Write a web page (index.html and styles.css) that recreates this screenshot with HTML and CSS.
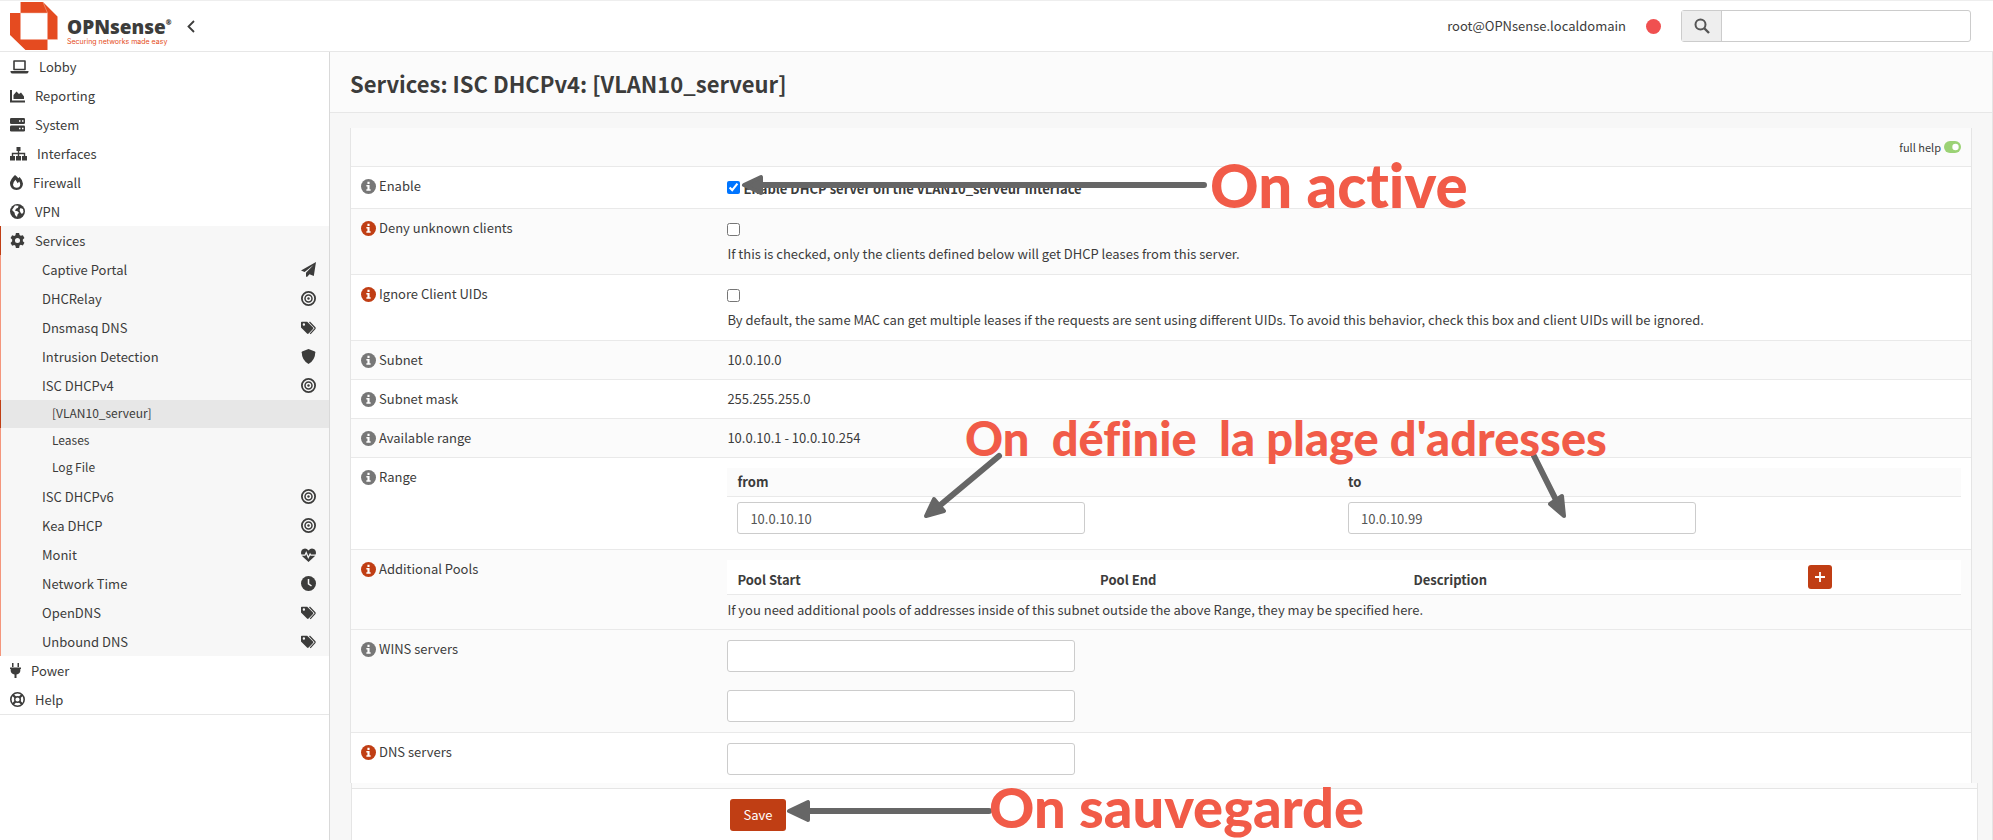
FILE: index.html
```
<!DOCTYPE html>
<html lang="en">

<head>
    <meta charset="utf-8">
    <meta name="viewport" content="width=device-width, initial-scale=1">
    <title>Services: ISC DHCPv4: [VLAN10_serveur]</title>
    <link rel="stylesheet" href="styles.css">
</head>

<body>
    <!-- Shared icons -->
    <svg class="sprite" aria-hidden="true">
        <symbol id="info" viewBox="0 0 14 14">
            <circle cx="7" cy="7" r="7" fill="currentColor" />
            <path d="M6 2.6h2v2H6zM5 5.6h3v4h1v1.3H5V9.600h1V7H5z" fill="#fff" />
        </symbol>
        <symbol id="laptop" viewBox="0 0 18 14">
            <path d="M3.500 1h11v8.500h-11z" fill="none" stroke="currentColor" stroke-width="1.600" stroke-linejoin="round" />
            <path d="M0 11h18v1q-.5 1.500-2 1.500H2Q.5 13.500 0 12z" fill="currentColor" />
        </symbol>
        <symbol id="chart" viewBox="0 0 15 14">
            <path d="M1 1v11.500h14" fill="none" stroke="currentColor" stroke-width="2" />
            <path d="M3.500 10V6l3-3.500L9 5l2-1.500 3 4V10z" fill="currentColor" />
        </symbol>
        <symbol id="server" viewBox="0 0 15 14">
            <rect y="0" width="15" height="6" rx="1.300" fill="currentColor" />
            <rect y="7.500" width="15" height="6" rx="1.300" fill="currentColor" />
            <path d="M9 3h1.500M12 3h1.500M9 10.500h1.500M12 10.500h1.500" stroke="#fff" stroke-width="1.300" />
        </symbol>
        <symbol id="sitemap" viewBox="0 0 17 14">
            <path d="M6.500 0h4v4h-4zM0 9h5v4.500H0zM6 9h5v4.500H6zM12 9h5v4.500h-5z" fill="currentColor" />
            <path d="M8.500 3v6M2.500 9V6.500h12V9" fill="none" stroke="currentColor" stroke-width="1.400" />
        </symbol>
        <symbol id="fire" viewBox="0 0 13 15">
            <path fill-rule="evenodd" d="M5 0q2 1.300 3.300 3.200L9.600 2Q13 5.500 13 8.700 12.600 14.500 6.500 15 .4 14.500 0 8.700 0 4.500 5 0zM5.500 4.800Q2.800 7.500 3 9.700q.5 3 3.500 3.100 3.500-.1 3.700-3.300 0-1.500-1-3L7.700 8.300z" fill="currentColor" />
        </symbol>
        <symbol id="globe" viewBox="0 0 15 15">
            <circle cx="7.500" cy="7.500" r="7.500" fill="currentColor" />
            <path d="M5 1.500l3.500.3-.5 2-2 1-1 2 2.500.5 1.500 1.500-1.500 1.700-.5 2.500-2-2-.5-2.500L2 6zM10.500 4l2.500 1 .5 3-1.500 2-1.500-1.500L9.500 6z" fill="#fff" />
        </symbol>
        <symbol id="gear" viewBox="0 0 16 16">
            <path fill-rule="evenodd" d="M6.300 0h3.400l.5 2.200 1.300.8 2.200-.7 1.700 2.900-1.700 1.600v1.900l1.700 1.600-1.700 2.900-2.200-.7-1.300.8L9.700 16H6.300l-.5-2.400-1.300-.8-2.200.7-1.700-2.900 1.700-1.800V7L.6 5.400l1.700-2.900 2.200.7 1.300-.8zM8 5.300a2.700 2.700 0 100 5.400 2.700 2.700 0 000-5.400z" fill="currentColor" />
        </symbol>
        <symbol id="plane" viewBox="0 0 15 15">
            <path fill-rule="evenodd" d="M15 0L12.800 14 8.500 12.200 6 15 5 14.500V10.800L12.500 3 3.600 9.900 0 8.400z" fill="currentColor" />
        </symbol>
        <symbol id="target" viewBox="0 0 15 15">
            <circle cx="7.500" cy="7.500" r="6.600" fill="none" stroke="currentColor" stroke-width="1.800" />
            <circle cx="7.500" cy="7.500" r="3.500" fill="none" stroke="currentColor" stroke-width="1.500" />
            <circle cx="7.500" cy="7.500" r="1.200" fill="currentColor" />
        </symbol>
        <symbol id="tags" viewBox="0 0 15 14">
            <path fill-rule="evenodd" d="M0 1.500Q0 .7.8.7h5.400L12 6.500q.7.700 0 1.500l-4.400 4.500q-.8.800-1.600 0L0 6.600zM2.900 2.300a1.200 1.200 0 100 2.400 1.200 1.200 0 000-2.400z" fill="currentColor" />
            <path d="M8.500 1l5.300 5.500q.6.700 0 1.400L9.200 12.800" fill="none" stroke="currentColor" stroke-width="1.200" />
        </symbol>
        <symbol id="shield" viewBox="0 0 15 15">
            <path d="M7.500 0l6.400 2.500q.4.300.4.700Q14.200 11 7.500 15 .8 11 .7 3.200q0-.5.4-.7z" fill="currentColor" />
        </symbol>
        <symbol id="heart" viewBox="0 0 15 14">
            <path d="M7.500 2.500Q9 .5 11 .5q4 .4 4 4.500 0 1.500-1.500 3.500l-6 5.500-6-5.500Q0 6.500 0 5 0 .900 4 .5q2 0 3.500 2z" fill="currentColor" />
            <path d="M0 7.200h4l1.200-2.600L7.300 9.500l1.800-3.500.7 1.200H15" fill="none" stroke="#f7f7f7" stroke-width="1.200" />
        </symbol>
        <symbol id="clock" viewBox="0 0 15 15">
            <circle cx="7.500" cy="7.500" r="7.500" fill="currentColor" />
            <path d="M7.500 3v4.800l3 2.200" fill="none" stroke="#f7f7f7" stroke-width="1.500" />
        </symbol>
        <symbol id="plug" viewBox="0 0 11 15">
            <path d="M2 0h1.500v4H2zM7.500 0H9v4H7.500zM0 4.500h11V6h-.7v2Q10 10.500 6.500 11.500V15h-2v-3.500Q1 10.500.7 8V6H0z" fill="currentColor" />
        </symbol>
        <symbol id="ring" viewBox="0 0 15 15">
            <circle cx="7.500" cy="7.500" r="6.700" fill="none" stroke="currentColor" stroke-width="1.600" />
            <circle cx="7.500" cy="7.500" r="2.800" fill="none" stroke="currentColor" stroke-width="1.400" />
            <path d="M3 3l2.600 2.600M12 3L9.400 5.600M3 12l2.600-2.600M12 12L9.400 9.400" stroke="currentColor" stroke-width="2.200" />
        </symbol>
    </svg>

    <header class="topbar">
        <a class="brand" href="#">
            <svg class="brand-mark" width="48" height="48" viewBox="0 0 48 48" aria-hidden="true">
                <path fill-rule="evenodd" fill="#e54b20" d="M10.500 0H33l14.500 14.500V37.500h-10V48h-22L0 33V11h10.500zM10.500 11v26.500h27V11z" />
                <path fill="none" stroke="#f6b9a6" d="M10.500 0v11h27L33 0M37.500 37.500h10" opacity=".5" />
            </svg>
            <span class="brand-text">
                <span class="brand-name">OPNsense<sup>®</sup></span>
                <span class="brand-tag">Securing networks made easy</span>
            </span>
        </a>
        <button class="collapse" type="button" aria-label="Toggle sidebar">
            <svg width="8" height="13" viewBox="0 0 8 13"><path d="M7 1L1.500 6.500 7 12" fill="none" stroke="currentColor" stroke-width="1.800" /></svg>
        </button>
        <span class="user">root@OPNsense.localdomain</span>
        <span class="status"></span>
        <form class="search">
            <label for="search" aria-label="Search">
                <svg width="16" height="16" viewBox="0 0 16 16"><circle cx="6.500" cy="6.500" r="5" fill="none" stroke="currentColor" stroke-width="2" /><path d="M10 10l5 5" stroke="currentColor" stroke-width="2.400" /></svg>
            </label>
            <input type="text" id="search">
        </form>
    </header>

    <div class="page">
        <!-- Sidebar menu -->
        <nav class="sidebar">
            <a href="#"><svg width="19" height="14"><use href="#laptop" /></svg>Lobby</a>
            <a href="#"><svg width="15" height="14"><use href="#chart" /></svg>Reporting</a>
            <a href="#"><svg width="15" height="14"><use href="#server" /></svg>System</a>
            <a href="#"><svg width="17" height="14"><use href="#sitemap" /></svg>Interfaces</a>
            <a href="#"><svg width="13" height="15"><use href="#fire" /></svg>Firewall</a>
            <a href="#"><svg width="15" height="15"><use href="#globe" /></svg>VPN</a>
            <a href="#" class="open"><svg width="15" height="15"><use href="#gear" /></svg>Services</a>
            <div class="submenu">
                <a href="#">Captive Portal<svg width="15" height="15"><use href="#plane" /></svg></a>
                <a href="#">DHCRelay<svg width="15" height="15"><use href="#target" /></svg></a>
                <a href="#">Dnsmasq DNS<svg width="15" height="14"><use href="#tags" /></svg></a>
                <a href="#">Intrusion Detection<svg width="15" height="15"><use href="#shield" /></svg></a>
                <a href="#">ISC DHCPv4<svg width="15" height="15"><use href="#target" /></svg></a>
                <a href="#" class="leaf active">[VLAN10_serveur]</a>
                <a href="#" class="leaf">Leases</a>
                <a href="#" class="leaf">Log File</a>
                <a href="#">ISC DHCPv6<svg width="15" height="15"><use href="#target" /></svg></a>
                <a href="#">Kea DHCP<svg width="15" height="15"><use href="#target" /></svg></a>
                <a href="#">Monit<svg width="15" height="14"><use href="#heart" /></svg></a>
                <a href="#">Network Time<svg width="15" height="15"><use href="#clock" /></svg></a>
                <a href="#">OpenDNS<svg width="15" height="14"><use href="#tags" /></svg></a>
                <a href="#">Unbound DNS<svg width="15" height="14"><use href="#tags" /></svg></a>
            </div>
            <a href="#"><svg width="11" height="15"><use href="#plug" /></svg>Power</a>
            <a href="#"><svg width="15" height="15"><use href="#ring" /></svg>Help</a>
        </nav>

        <main class="main">
            <div class="page-head">
                <h1>Services: ISC DHCPv4: [VLAN10_serveur]</h1>
            </div>

            <form class="content">
                <div class="panel">
                    <div class="full-help">
                        full help
                        <svg width="17" height="12" viewBox="0 0 17 12"><rect width="17" height="12" rx="6" fill="#9bd275" /><circle cx="11.500" cy="6" r="3.200" fill="#fff" /></svg>
                    </div>

                    <div class="row">
                        <div class="name"><svg class="info"><use href="#info" /></svg>Enable</div>
                        <div class="value">
                            <div class="check">
                                <input type="checkbox" id="enable" checked>
                                <label for="enable">Enable DHCP server on the VLAN10_serveur interface</label>
                            </div>
                        </div>
                    </div>
                    <div class="row">
                        <label class="name" for="deny"><svg class="info help"><use href="#info" /></svg>Deny unknown clients</label>
                        <div class="value">
                            <div class="check"><input type="checkbox" id="deny"></div>
                            <p class="hint">If this is checked, only the clients defined below will get DHCP leases from this server.</p>
                        </div>
                    </div>
                    <div class="row">
                        <label class="name" for="ignore"><svg class="info help"><use href="#info" /></svg>Ignore Client UIDs</label>
                        <div class="value">
                            <div class="check"><input type="checkbox" id="ignore"></div>
                            <p class="hint">By default, the same MAC can get multiple leases if the requests are sent using different UIDs. To avoid this behavior, check this box and client UIDs will be ignored.</p>
                        </div>
                    </div>
                    <div class="row">
                        <div class="name"><svg class="info"><use href="#info" /></svg>Subnet</div>
                        <div class="value">10.0.10.0</div>
                    </div>
                    <div class="row">
                        <div class="name"><svg class="info"><use href="#info" /></svg>Subnet mask</div>
                        <div class="value">255.255.255.0</div>
                    </div>
                    <div class="row">
                        <div class="name"><svg class="info"><use href="#info" /></svg>Available range</div>
                        <div class="value">10.0.10.1 - 10.0.10.254</div>
                    </div>
                    <div class="row">
                        <div class="name"><svg class="info"><use href="#info" /></svg>Range</div>
                        <div class="value inset">
                            <table class="range">
                                <thead>
                                    <tr>
                                        <th class="range-from"><label for="from">from</label></th>
                                        <th><label for="to">to</label></th>
                                    </tr>
                                </thead>
                                <tbody>
                                    <tr>
                                        <td><input type="text" id="from" value="10.0.10.10"></td>
                                        <td><input type="text" id="to" value="10.0.10.99"></td>
                                    </tr>
                                </tbody>
                            </table>
                        </div>
                    </div>
                    <div class="row shaded">
                        <div class="name"><svg class="info help"><use href="#info" /></svg>Additional Pools</div>
                        <div class="value inset">
                            <table class="pools">
                                <thead>
                                    <tr>
                                        <th class="pool-start">Pool Start</th>
                                        <th class="pool-end">Pool End</th>
                                        <th class="pool-desc">Description</th>
                                        <th class="pool-add">
                                            <button class="add" type="button" aria-label="Add pool">
                                                <svg width="12" height="12" viewBox="0 0 12 12"><path d="M6 1v10M1 6h10" stroke="currentColor" stroke-width="1.800" /></svg>
                                            </button>
                                        </th>
                                    </tr>
                                </thead>
                            </table>
                            <p class="pool-help">If you need additional pools of addresses inside of this subnet outside the above Range, they may be specified here.</p>
                        </div>
                    </div>
                    <div class="row shaded">
                        <label class="name" for="wins1"><svg class="info"><use href="#info" /></svg>WINS servers</label>
                        <div class="value inset stack">
                            <input type="text" id="wins1">
                            <input type="text" id="wins2" aria-label="Second WINS server">
                        </div>
                    </div>
                    <div class="row plain">
                        <label class="name" for="dns1"><svg class="info help"><use href="#info" /></svg>DNS servers</label>
                        <div class="value inset"><input type="text" id="dns1"></div>
                    </div>
                </div>

                <div class="footer">
                    <div class="save-row">
                        <button class="save" type="button">Save</button>
                    </div>
                </div>
            </form>
        </main>

        <!-- Tutorial notes drawn over the form -->
        <svg class="arrows" width="1993" height="788" viewBox="0 52 1993 788" aria-hidden="true">
            <g stroke="#666" fill="#666" stroke-linecap="round" stroke-linejoin="round">
                <path d="M1204 185H762M999 456L938 507M1534 456L1557 502M989 811H806" stroke-width="6" />
                <path d="M744 185l17-8v16zM926 516l8-17 10 12zM1564 516l-14-12 12-8zM789 811l19-9v18z" stroke-width="4" />
            </g>
        </svg>
        <p class="note note-enable">On active</p>
        <p class="note note-range">On  définie  la plage d'adresses</p>
        <p class="note note-save">On sauvegarde</p>
    </div>
</body>

</html>
```
FILE: styles.css
```
* {
    box-sizing: border-box;
}

body {
    margin: 0;
    min-height: 100vh;
    display: flex;
    flex-direction: column;
    background-color: #fff;
    color: #3c3c3b;
    font-family: "Noto Sans CJK SC", "Noto Sans", sans-serif;
    font-size: 13px;
    line-height: 22px;
    overflow: hidden;
}

a {
    color: inherit;
    text-decoration: none;
}

p {
    margin: 0;
}

button,
input {
    font: inherit;
    color: inherit;
}

.sprite {
    display: none;
}

/* Top bar */
.topbar {
    display: flex;
    align-items: center;
    height: 52px;
    padding: 0 22px 0 10px;
    border-top: 1px solid #eee;
    border-bottom: 1px solid #e7e7e7;
}

.brand {
    display: flex;
    align-items: center;
    gap: 9px;
}

.brand-text {
    display: flex;
    flex-direction: column;
    padding-top: 10px;
}

.brand-name {
    font-family: "Open Sans", sans-serif;
    font-size: 19px;
    font-weight: 800;
    line-height: 20px;
}

.brand-name sup {
    font-size: 7px;
    line-height: 1;
    vertical-align: 9px;
}

.brand-tag {
    color: #e54b20;
    font-family: Inter, sans-serif;
    font-size: 7px;
    line-height: 9px;
}

.collapse {
    display: flex;
    margin-left: 15px;
    padding: 0;
    border: 0;
    background: none;
}

.user {
    margin-left: auto;
}

.status {
    width: 15px;
    height: 15px;
    margin: 0 20px;
    border-radius: 50%;
    background-color: #f05050;
}

.search {
    display: flex;
    width: 290px;
    height: 32px;
    border: 1px solid #ccc;
    border-radius: 3px;
}

.search label {
    display: flex;
    align-items: center;
    justify-content: center;
    width: 40px;
    border-right: 1px solid #ccc;
    background-color: #eee;
    color: #555;
}

.search input {
    flex: 1;
    min-width: 0;
    border: 0;
    background: none;
}

/* Layout */
.page {
    position: relative;
    flex: 1;
    display: flex;
}

.main {
    flex: 1;
    display: flex;
    flex-direction: column;
    min-width: 0;
    background-color: #f7f7f7;
    border-right: 1px solid #e5e5e5;
}

/* Sidebar */
.sidebar {
    width: 330px;
    border-right: 1px solid #d9d9d9;
}

.sidebar a {
    display: flex;
    align-items: center;
    gap: 10px;
    height: 29px;
    padding: 0 14px 0 10px;
}

.sidebar > a:last-child {
    height: 30px;
    border-bottom: 1px solid #e7e7e7;
}

.sidebar > .open {
    padding-left: 9px;
    border-left: 1px solid #c03e14;
    background-color: #f7f7f7;
}

.submenu {
    background-color: #f7f7f7;
}

.submenu a {
    justify-content: space-between;
    padding: 0 13px 0 41px;
    border-left: 1px solid #f4967c;
}

.submenu .leaf {
    height: 27px;
    padding-bottom: 3px;
    padding-left: 51px;
    font-size: 12px;
}

.submenu .active {
    height: 28px;
    border-left-color: #c03e14;
    background-color: #e7e7e7;
}

/* Page title */
.page-head {
    height: 61px;
    padding: 15px 20px;
    border-bottom: 1px solid #e7e7e7;
    background-color: #fbfbfb;
}

h1 {
    margin: 0;
    font-size: 22px;
    font-weight: 700;
    line-height: 32px;
}

/* Form rows */
.content {
    flex: 1;
    display: flex;
    flex-direction: column;
    padding: 15px 20px 0;
}

.panel {
    border: solid #e5e5e5;
    border-width: 0 1px;
    background-color: #fff;
}

.full-help {
    display: flex;
    align-items: center;
    justify-content: flex-end;
    gap: 3px;
    height: 38px;
    padding: 0 10px;
    background-color: #fbfbfb;
    font-size: 11px;
}

.row {
    display: flex;
    padding: 8px 10px;
    border-top: 1px solid #e9e9e9;
}

.row:nth-child(odd),
.row.shaded {
    background-color: #fbfbfb;
}

.row.plain {
    background-color: #fff;
}

.name {
    display: flex;
    align-items: center;
    gap: 3px;
    width: 22.9%;
    height: 22px;
}

.info {
    width: 15px;
    height: 15px;
    color: #777;
}

.help {
    color: #c03e14;
}

.value {
    flex: 1;
    min-width: 0;
}

.inset {
    padding-top: 2px;
}

.check {
    display: flex;
    align-items: center;
    gap: 3px;
    height: 25px;
    font-weight: 700;
}

.check input {
    width: 13px;
    height: 13px;
    margin: 0;
}

.check label {
    padding-top: 2px;
}

.hint {
    margin: 1px 0;
}

input[type="text"] {
    padding: 4px 12px;
    outline: 0;
}

.value input[type="text"] {
    display: block;
    width: 348px;
    height: 32px;
    border: 1px solid #ccc;
    border-radius: 3px;
    background-color: #fff;
    color: #555;
}

.stack {
    display: grid;
    gap: 18px;
    padding-bottom: 2px;
}

table {
    width: 100%;
    border-collapse: separate;
    border-spacing: 0;
    table-layout: fixed;
}

th {
    padding: 0 10px;
    border-bottom: 1px solid #e9e9e9;
    font-weight: 700;
    text-align: left;
}

.range th {
    height: 29px;
    background-color: #fbfbfb;
}

.range td {
    padding: 5px 10px 7px;
}

.range-from {
    width: 49.5%;
}

.pools {
    background-color: #fff;
}

.pools th {
    height: 35px;
    padding-top: 6px;
}

.pools .pool-add {
    padding: 5px 10px;
}

.pool-start {
    width: 29.4%;
}

.pool-end {
    width: 25.4%;
}

.pool-desc {
    width: 32%;
}

.add {
    display: flex;
    align-items: center;
    justify-content: center;
    width: 24px;
    height: 24px;
    padding: 0;
    border: 0;
    border-radius: 3px;
    background-color: #c03e14;
    color: #fff;
}

.pool-help {
    padding-top: 4px;
}

.footer {
    flex: 1;
    display: flex;
    flex-direction: column;
    margin-right: -6px;
    margin-left: 1px;
    padding-top: 5px;
    border: solid #e5e5e5;
    border-width: 0 1px;
    background-color: #fbfbfb;
}

.save-row {
    flex: 1;
    padding: 10px 10px 8px 378px;
    border-top: 1px solid #e5e5e5;
    background-color: #fff;
}

.save {
    width: 56px;
    height: 32px;
    padding: 0;
    border: 0;
    border-radius: 3px;
    background-color: #c03e14;
    color: #fff;
}

/* Notes over the form */
.arrows {
    position: absolute;
    top: 0;
    left: 0;
    pointer-events: none;
}

.note {
    position: absolute;
    color: #f15b48;
    font-family: Lato, sans-serif;
    font-size: 60px;
    font-weight: 900;
    font-variant-ligatures: none;
    line-height: 60px;
    white-space: pre;
}

.note-enable {
    top: 103px;
    left: 1210px;
}

.note-range {
    top: 356px;
    left: 965px;
    font-size: 47px;
}

.note-save {
    top: 725px;
    left: 989px;
    font-size: 56px;
}
```
